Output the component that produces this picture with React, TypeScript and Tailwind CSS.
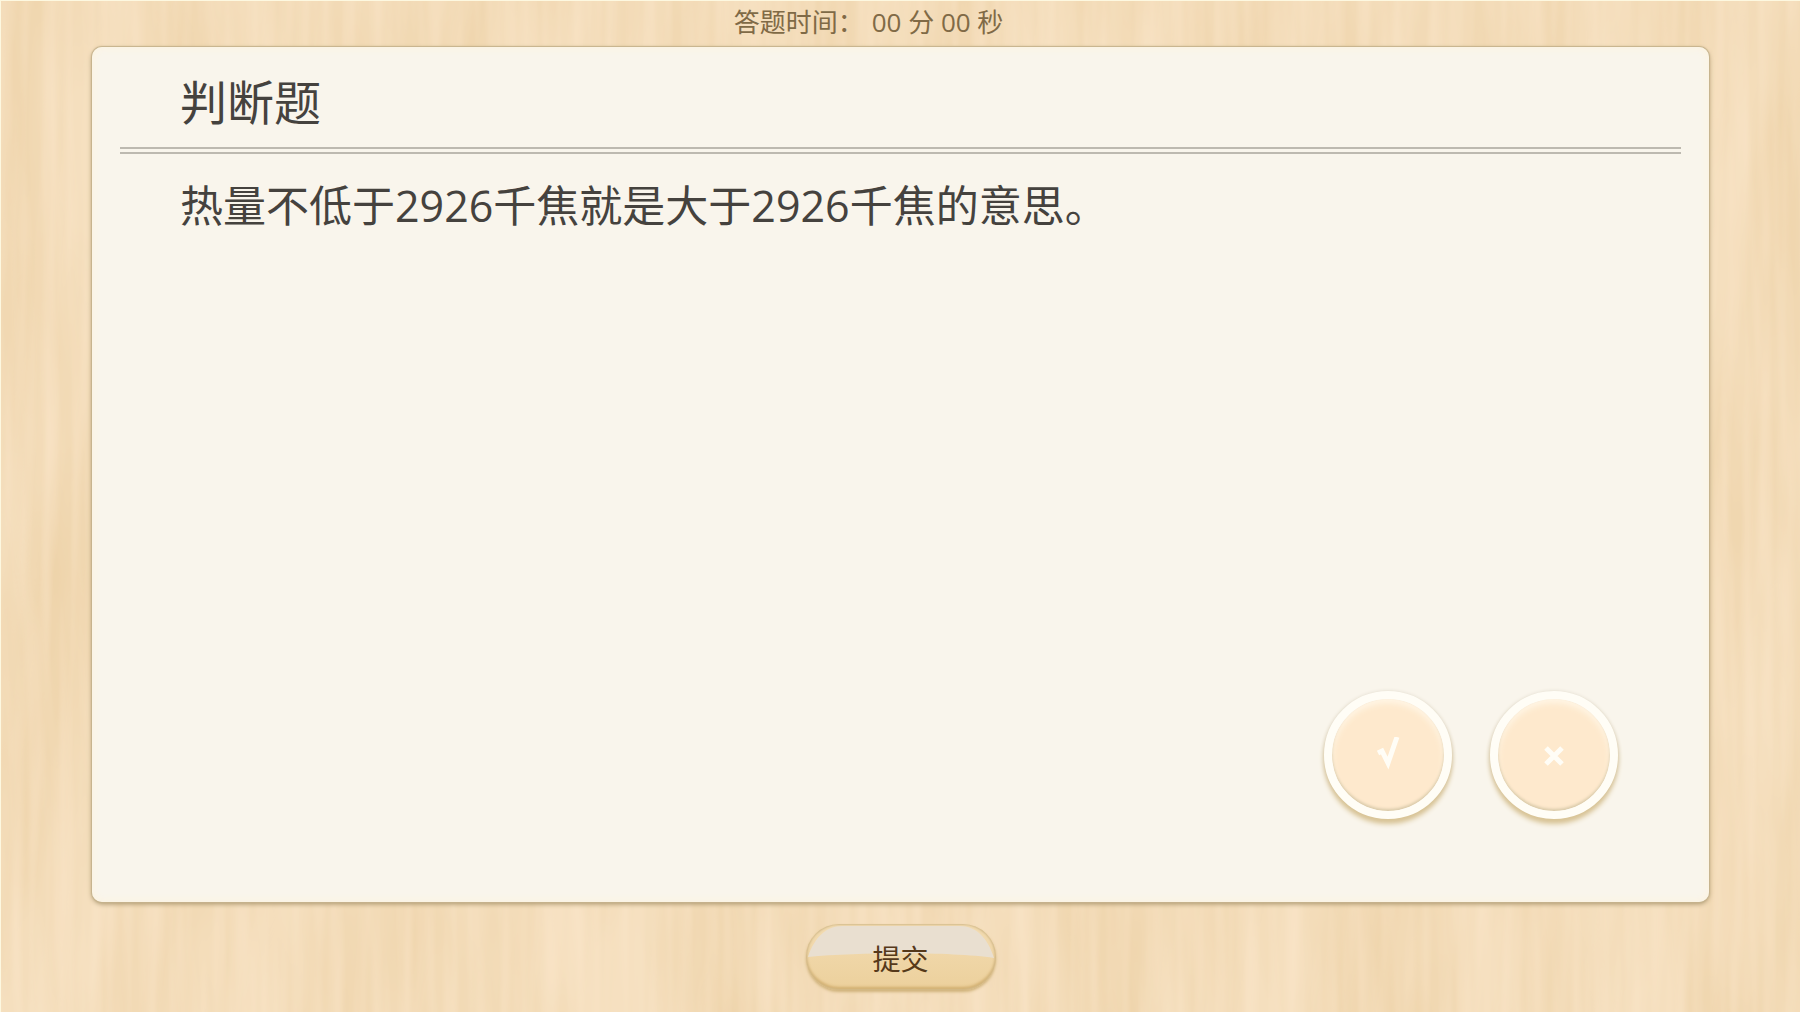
type AnswerButtonProps = {
  label: string;
  path: string;
};

function WoodBackground() {
  return (
    <svg className="absolute inset-0 h-full w-full" aria-hidden>
      <defs>
        {/* Broad planks */}
        <filter id="planks" x="0" y="0" width="100%" height="100%" colorInterpolationFilters="sRGB">
          <feTurbulence
            type="fractalNoise"
            baseFrequency="0.014 0.0025"
            numOctaves="4"
            seed="11"
          />
          <feColorMatrix
            values="0 0 0 0 0.91
                    0 0 0 0 0.79
                    0 0 0 0 0.6
                    0.9 0 0 0 -0.25"
          />
        </filter>
        {/* Fine fibres */}
        <filter id="grain" x="0" y="0" width="100%" height="100%" colorInterpolationFilters="sRGB">
          <feTurbulence
            type="fractalNoise"
            baseFrequency="0.07 0.004"
            numOctaves="2"
            seed="4"
          />
          <feColorMatrix
            values="0 0 0 0 0.99
                    0 0 0 0 0.91
                    0 0 0 0 0.81
                    0.9 0 0 0 -0.32"
          />
        </filter>
      </defs>
      <rect width="100%" height="100%" fill="#f5dfbe" />
      <rect width="100%" height="100%" filter="url(#planks)" />
      <rect width="100%" height="100%" filter="url(#grain)" />
    </svg>
  );
}

function AnswerButton({ label, path }: AnswerButtonProps) {
  return (
    <button
      type="button"
      aria-label={label}
      className="flex size-32 items-center justify-center rounded-full border-8 border-[#fffdf6] bg-[#fee9cd] bg-clip-padding shadow-[0_5px_5px_#d9c496,0_1px_4px_#d3cbbb,inset_0_-2px_3px_#d8c9a8,inset_0_4px_6px_#fff6e6]"
    >
      <svg width="28" height="36" viewBox="0 0 28 36" fill="none" stroke="#fffdf6" aria-hidden>
        <path d={path} strokeWidth="5" />
      </svg>
    </button>
  );
}

export default function App() {
  return (
    <div className="relative flex min-h-screen flex-col border-t border-l border-[#fdf8e0] font-['Open_Sans','Noto_Sans_CJK_SC',sans-serif] font-[380]">
      <WoodBackground />

      <header className="relative flex h-[46px] items-center justify-center gap-2 pr-16 pb-1 text-[26px] leading-none text-[#806a46]">
        <span>答题时间：</span>
        <time>00 分 00 秒</time>
      </header>

      <main className="relative mx-[91px] flex flex-1 flex-col rounded-[10px] bg-[#f9f5ec] shadow-[0_0_1px_1px_#c6b38d,0_2px_5px_#a8946c,inset_0_0_8px_#fdf3de]">
        <h1 className="mx-7 flex h-[107px] items-center border-b-[7px] border-double border-[#bdb9b0] pt-2.5 pl-[60px] text-[47px] leading-none text-[#45423e]">
          判断题
        </h1>
        <p className="mt-[26px] px-[88px] text-[43px] leading-[52px] text-[#45423e]">
          热量不低于2926千焦就是大于2926千焦的意思。
        </p>

        <div className="mt-auto flex justify-end gap-[38px] pr-[91px] pb-[83px]">
          <AnswerButton label="正确" path="M4 16L8 14L14 26L23 0" />
          <AnswerButton label="错误" path="M6 11L22 27M22 11L6 27" />
        </div>
      </main>

      <footer className="relative flex h-[110px] items-center justify-center">
        <button
          type="button"
          className="relative flex h-[66px] w-[190px] items-center justify-center overflow-hidden rounded-full bg-linear-to-b from-[#f3dcb2] to-[#ecd09c] pt-1 text-[28px] leading-none text-[#56391a] shadow-[0_2px_3px_#cfb27a,inset_0_0_2px_1px_#d3bb8c,inset_0_-3px_3px_#d1ad6c]"
        >
          {/* Glossy highlight */}
          <svg
            className="absolute inset-x-0.5 top-0.5 h-8"
            width="186"
            height="32"
            viewBox="0 0 186 32"
            aria-hidden
          >
            <path
              d="M0 31C6 12 18 0 34 0H152C168 0 180 12 186 32C145 26 55 26 0 31Z"
              fill="#e9dfd0"
            />
          </svg>
          <span className="relative">提交</span>
        </button>
      </footer>
    </div>
  );
}
